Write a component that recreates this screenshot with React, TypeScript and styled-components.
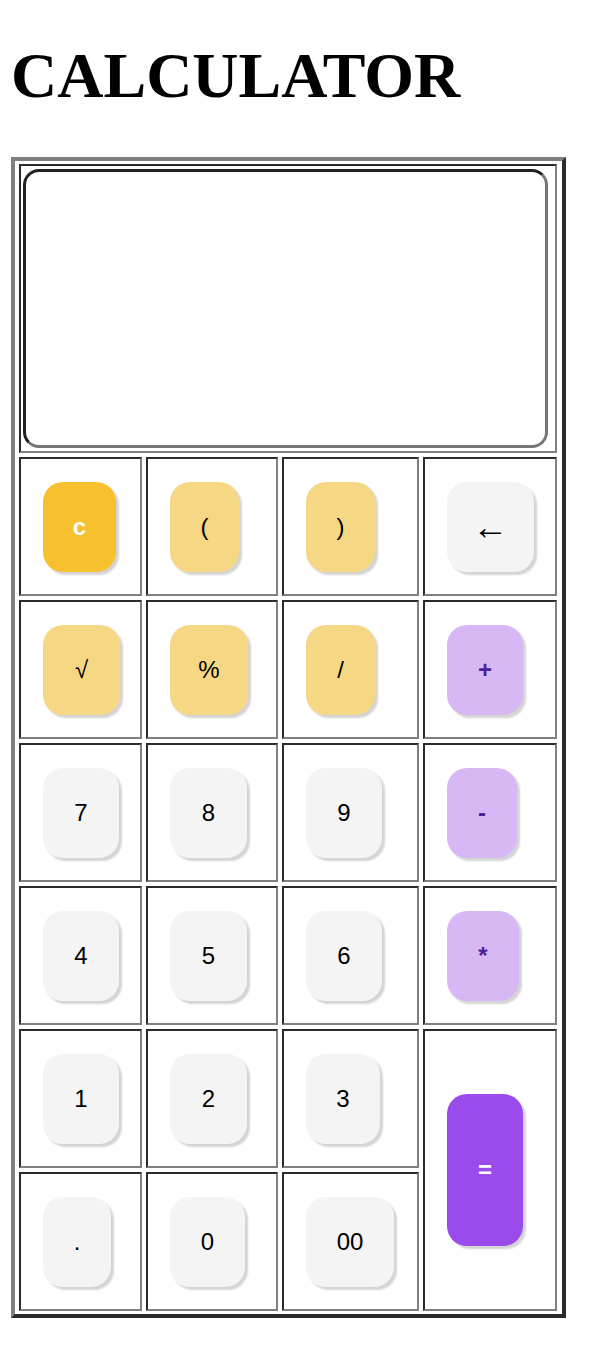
import * as React from "react";
import styled, { createGlobalStyle, css } from "styled-components";

const GlobalStyle = createGlobalStyle`
  body {
    margin: 0;
    background: #fff;
  }
`;

type Tone = "clear" | "paren" | "plain" | "op" | "equals";

const Page = styled.div`
  padding-left: 11px;
  padding-bottom: 27px;
`;

const Title = styled.h1`
  font-family: "Liberation Serif", "Times New Roman", serif;
  font-weight: bold;
  font-size: 64px;
  line-height: 70px;
  margin: 41px 0 46px;
`;

const Frame = styled.div`
  box-sizing: border-box;
  width: 555px;
  display: grid;
  grid-template-columns: 123px 132px 137px 134px;
  grid-template-rows: 289px repeat(6, 139px);
  gap: 4px;
  padding: 3px 5px 3px 4px;
  border: 4px solid;
  border-color: #808080 #2b2b2b #2b2b2b #808080;
`;

const Cell = styled.div<{ $rows?: number }>`
  box-sizing: border-box;
  border: 2px solid;
  border-color: #2b2b2b #808080 #808080 #2b2b2b;
  display: flex;
  align-items: center;
  padding-left: 22px;
  ${(p) => p.$rows && css`grid-row: span ${p.$rows};`}
`;

const DisplayCell = styled.div`
  grid-column: 1 / -1;
  box-sizing: border-box;
  border: 2px solid;
  border-color: #2b2b2b #808080 #808080 #2b2b2b;
  padding: 3px 3px 3px 2px;
`;

const Screen = styled.div`
  box-sizing: border-box;
  width: 525px;
  height: 279px;
  border: 3px solid;
  border-color: #222 #777 #777 #222;
  border-radius: 16px;
  background: #fff;
`;

const toneStyles: Record<Tone, ReturnType<typeof css>> = {
  clear: css`
    background: #f6c02f;
    color: #fff;
    font-weight: bold;
  `,
  paren: css`
    background: #f6d884;
    color: #000;
  `,
  plain: css`
    background: #f4f4f4;
    color: #000;
  `,
  op: css`
    background: #d8b8f4;
    color: #4f1d96;
    font-weight: bold;
  `,
  equals: css`
    background: #9b4aec;
    color: #fff;
    font-weight: bold;
  `,
};

const Key = styled.button<{ $tone: Tone; $w: number; $h: number; $size: number }>`
  box-sizing: border-box;
  width: ${(p) => p.$w}px;
  height: ${(p) => p.$h}px;
  border: none;
  border-radius: 20px;
  padding: 0;
  font-family: "Liberation Sans", Arial, sans-serif;
  font-size: ${(p) => p.$size}px;
  box-shadow: 3px 3px 2px #d4d4d4;
  cursor: pointer;
  ${(p) => toneStyles[p.$tone]}
`;

type KeyDef = { label: string; tone: Tone; w: number; h?: number; size?: number; rows?: number };

const keys: KeyDef[] = [
  { label: "c", tone: "clear", w: 73 },
  { label: "(", tone: "paren", w: 69 },
  { label: ")", tone: "paren", w: 69 },
  { label: "←", tone: "plain", w: 87, size: 36 },
  { label: "√", tone: "paren", w: 77 },
  { label: "%", tone: "paren", w: 78 },
  { label: "/", tone: "paren", w: 69 },
  { label: "+", tone: "op", w: 76 },
  { label: "7", tone: "plain", w: 76 },
  { label: "8", tone: "plain", w: 77 },
  { label: "9", tone: "plain", w: 76 },
  { label: "-", tone: "op", w: 70 },
  { label: "4", tone: "plain", w: 76 },
  { label: "5", tone: "plain", w: 77 },
  { label: "6", tone: "plain", w: 76 },
  { label: "*", tone: "op", w: 72 },
  { label: "1", tone: "plain", w: 76 },
  { label: "2", tone: "plain", w: 77 },
  { label: "3", tone: "plain", w: 74 },
  { label: "=", tone: "equals", w: 76, h: 152, rows: 2 },
  { label: ".", tone: "plain", w: 68 },
  { label: "0", tone: "plain", w: 75 },
  { label: "00", tone: "plain", w: 88 },
];

export default function App() {
  return (
    <>
      <GlobalStyle />
      <Page>
        <Title>CALCULATOR</Title>
        <Frame>
          <DisplayCell>
            <Screen />
          </DisplayCell>
          {keys.map((k) => (
            <Cell key={k.label} $rows={k.rows}>
              <Key $tone={k.tone} $w={k.w} $h={k.h ?? 90} $size={k.size ?? 24}>
                {k.label}
              </Key>
            </Cell>
          ))}
        </Frame>
      </Page>
    </>
  );
}
